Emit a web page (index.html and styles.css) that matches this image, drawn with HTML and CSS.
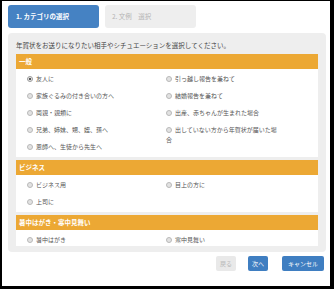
FILE: index.html
```html
<!DOCTYPE html>
<html lang="ja">
<head>
    <meta charset="UTF-8">
    <meta name="viewport" content="width=device-width, initial-scale=1.0">
    <title>年賀状 文例選択</title>
    <link rel="stylesheet" href="styles.css">
</head>
<body>
    <div class="frame">
        <div class="tabs">
            <div class="tab active">1. カテゴリの選択</div>
            <div class="tab">2. 文例　選択</div>
        </div>

        <div class="panel">
            <p class="intro">年賀状をお送りになりたい相手やシチュエーションを選択してください。</p>

            <div class="section">
                <div class="section-head">一般</div>
                <div class="section-body">
                    <label class="item"><span class="radio checked"></span>友人に</label>
                    <label class="item"><span class="radio"></span>引っ越し報告を兼ねて</label>
                    <label class="item"><span class="radio"></span>家族ぐるみの付き合いの方へ</label>
                    <label class="item"><span class="radio"></span>結婚報告を兼ねて</label>
                    <label class="item"><span class="radio"></span>両親・親類に</label>
                    <label class="item"><span class="radio"></span>出産、赤ちゃんが生まれた場合</label>
                    <label class="item"><span class="radio"></span>兄弟、姉妹、甥、姪、孫へ</label>
                    <label class="item"><span class="radio"></span>出していない方から年賀状が届いた場合</label>
                    <label class="item"><span class="radio"></span>恩師へ、生徒から先生へ</label>
                </div>
            </div>

            <div class="section">
                <div class="section-head">ビジネス</div>
                <div class="section-body">
                    <label class="item"><span class="radio"></span>ビジネス用</label>
                    <label class="item"><span class="radio"></span>目上の方に</label>
                    <label class="item"><span class="radio"></span>上司に</label>
                </div>
            </div>

            <div class="section">
                <div class="section-head">暑中はがき・寒中見舞い</div>
                <div class="section-body">
                    <label class="item"><span class="radio"></span>暑中はがき</label>
                    <label class="item"><span class="radio"></span>寒中見舞い</label>
                </div>
            </div>
        </div>

        <div class="actions">
            <button class="btn disabled">戻る</button>
            <button class="btn primary">次へ</button>
            <button class="btn primary wide">キャンセル</button>
        </div>
    </div>
</body>
</html>
```

FILE: styles.css
```css
body {
    margin: 0;
    background: #000;
    font-family: "Noto Sans CJK JP", "Noto Sans", sans-serif;
    color: #444;
}
.frame {
    margin: 1px 4px 3px 2px;
    height: 285px;
    background: #fff;
    padding: 4px 0 0 6px;
    box-sizing: border-box;
}
.tabs {
    display: flex;
    gap: 6px;
}
.tab {
    width: 91px;
    height: 23px;
    line-height: 23px;
    padding-left: 7px;
    box-sizing: border-box;
    border-radius: 3px;
    background: #eeeeee;
    color: #b5b5b5;
    font-size: 6.5px;
}
.tab.active {
    background: #4582c3;
    color: #fff;
    font-weight: bold;
    padding-left: 8px;
}
.panel {
    width: 318px;
    margin-top: 5px;
    padding: 7px 8px 6px;
    box-sizing: border-box;
    background: #eeeeee;
    border-radius: 4px;
}
.intro {
    margin: 0 0 4px;
    font-size: 6.5px;
    line-height: 10px;
    color: #444;
}
.section {
    margin-bottom: 3px;
}
.section:last-child {
    margin-bottom: 0;
}
.section-head {
    height: 15px;
    line-height: 15px;
    padding-left: 3px;
    background: #eca834;
    color: #fff;
    font-size: 6.5px;
    font-weight: bold;
}
.section-body {
    display: grid;
    grid-template-columns: 139px 112px;
    grid-auto-rows: 17px;
    padding: 1px 0 2px 11px;
    background: #fff;
}
.section:last-child .section-body {
    padding-bottom: 0;
    grid-auto-rows: 15px;
}
.item {
    padding-top: 4px;
    font-size: 6px;
    line-height: 10px;
    color: #555;
}
.radio {
    display: inline-block;
    width: 4px;
    height: 4px;
    margin-right: 3px;
    border: 1px solid #b9b9b9;
    border-radius: 50%;
    background: #e2e2e2;
    vertical-align: -0.5px;
}
.radio.checked {
    background: radial-gradient(circle, #555 0 1.3px, #eee 1.6px);
    border-color: #999;
}
.actions {
    display: flex;
    justify-content: flex-end;
    gap: 12px;
    width: 316px;
    margin-top: 4px;
}
.btn {
    height: 15px;
    width: 20px;
    padding: 0;
    border: none;
    border-radius: 2px;
    font-family: inherit;
    font-size: 6px;
    line-height: 15px;
}
.btn.primary {
    background: #3f7ec1;
    color: #fff;
}
.btn.wide {
    width: 42px;
    margin-left: 2px;
}
.btn.disabled {
    background: #e9e9e9;
    color: #b8b8b8;
}
```
